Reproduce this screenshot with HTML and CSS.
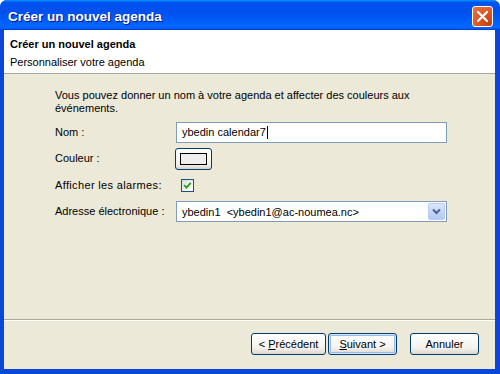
FILE: index.html
```html
<!DOCTYPE html>
<html lang="fr">
<head>
<meta charset="utf-8">
<title>Créer un nouvel agenda</title>
<link rel="stylesheet" href="styles.css">
</head>
<body>
<div class="window">
  <div class="titlebar">
    <span class="title">Créer un nouvel agenda</span>
    <span class="close">
      <svg width="19" height="19" viewBox="0 0 19 19"><path d="M5 5 L14 14 M14 5 L5 14" stroke="#fff" stroke-width="2.2" stroke-linecap="round" fill="none"/></svg>
    </span>
  </div>
  <div class="main">
    <div class="header">
      <div class="h-title">Créer un nouvel agenda</div>
      <div class="h-sub">Personnaliser votre agenda</div>
    </div>
    <div class="content">
      <p class="intro">Vous pouvez donner un nom à votre agenda et affecter des couleurs aux<br>événements.</p>
      <div class="form">
        <span class="label">Nom :</span>
        <div class="textbox"><span>ybedin calendar7</span><span class="caret"></span></div>
        <span class="label">Couleur :</span>
        <div class="colorbtn"><span class="swatch"></span></div>
        <span class="label label-wide">Afficher les alarmes:</span>
        <div class="check"><svg width="9" height="9" viewBox="0 0 9 9"><path d="M1.2 4.2 L3.4 6.6 L7.8 1.8" stroke="#21A121" stroke-width="1.8" fill="none"/></svg></div>
        <span class="label">Adresse électronique :</span>
        <div class="select"><span class="sel-text">ybedin1&nbsp; &lt;ybedin1@ac-noumea.nc&gt;</span><span class="drop"><svg width="9" height="7" viewBox="0 0 9 7"><path d="M1 1.5 L4.5 5 L8 1.5" stroke="#4D6185" stroke-width="2" fill="none"/></svg></span></div>
      </div>
    </div>
    <div class="footer">
      <button class="btn prev">&lt; <u>P</u>récédent</button>
      <button class="btn next"><u>S</u>uivant &gt;</button>
      <button class="btn cancel">Annuler</button>
    </div>
  </div>
</div>
</body>
</html>
```
FILE: styles.css
```css
* { box-sizing: border-box; }
html, body { margin: 0; padding: 0; }
body {
  width: 500px;
  height: 374px;
  overflow: hidden;
  background: #fff;
  font-family: "Liberation Sans", Arial, sans-serif;
  font-size: 11px;
  color: #000;
}
.window {
  width: 500px;
  height: 374px;
  display: flex;
  flex-direction: column;
  background: #0A46D8;
  border-radius: 7px 7px 0 0;
  overflow: hidden;
}
.titlebar {
  flex: none;
  height: 30px;
  display: flex;
  align-items: center;
  padding: 0 7px 0 8px;
  background: linear-gradient(180deg, #0997ff, #0053ee 8%, #0050ee 40%, #0066ff 88%, #0066ff 93%, #005bff 95%, #003dd7 96%, #003dd7);
}
.title {
  flex: 1;
  color: #fff;
  font-weight: bold;
  font-size: 13.5px;
  padding-top: 3px;
  text-shadow: 1px 1px #0F1089;
}
.close {
  width: 21px;
  height: 21px;
  margin-top: 3px;
  border: 1px solid #fff;
  border-radius: 3px;
  background: radial-gradient(circle at 85% 85%, #c8400f 0%, #dd5a26 55%, #e8744d 100%);
  display: flex;
  align-items: center;
  justify-content: center;
}
.main {
  flex: 1;
  display: flex;
  flex-direction: column;
  margin: 0 5px 5px 4px;
  background: #ECE9D8;
}
.header {
  flex: none;
  height: 44px;
  background: #fff;
  border-bottom: 1px solid #ACA899;
  padding: 7px 6px 0;
}
.h-title { font-weight: bold; line-height: 14px; }
.h-sub { line-height: 14px; margin-top: 4px; }
.content {
  flex: 1;
  padding: 15px 0 0 51px;
}
.intro {
  margin: 0;
  line-height: 13px;
}
.form {
  display: grid;
  grid-template-columns: 120px 272px;
  grid-auto-rows: 22px;
  row-gap: 4.5px;
  margin-top: 6px;
  align-items: center;
}
.label { line-height: 13px; }
.label-wide { letter-spacing: 0.35px; }
.textbox {
  margin-left: 1px;
  width: 271px;
  height: 21px;
  background: #fff;
  border: 1px solid #7F9DB9;
  display: flex;
  align-items: center;
  padding-left: 5px;
}
.caret {
  width: 1px;
  height: 13px;
  background: #000;
  margin-left: 1px;
}
.colorbtn {
  width: 37px;
  height: 22px;
  border: 1px solid #003C74;
  border-radius: 3px;
  background: linear-gradient(#fff, #F0EFEA 80%, #D8D2C6);
  display: flex;
  align-items: center;
  justify-content: center;
}
.swatch {
  width: 27px;
  height: 12px;
  border: 1px solid #000;
  background: #EEEEEE;
}
.check {
  margin-left: 6px;
  width: 13px;
  height: 13px;
  border: 1px solid #1C5180;
  background: linear-gradient(135deg, #DCDCD7, #fff);
  display: flex;
  align-items: center;
  justify-content: center;
}
.select {
  margin-left: 1px;
  width: 271px;
  height: 21px;
  background: #fff;
  border: 1px solid #7F9DB9;
  display: flex;
  align-items: center;
  padding: 1px 1px 1px 5px;
}
.sel-text { flex: 1; white-space: pre; }
.drop {
  width: 17px;
  height: 17px;
  border: 1px solid #B8CCF5;
  border-radius: 2px;
  background: linear-gradient(#DCE6FC, #C1D3FB 60%, #B4C7F5);
  display: flex;
  align-items: center;
  justify-content: center;
}
.footer {
  flex: none;
  height: 50px;
  border-top: 1px solid #ACA899;
  box-shadow: inset 0 1px #fff;
  display: flex;
  justify-content: flex-end;
  align-items: flex-start;
  padding: 13px 16px 0 0;
}
.btn {
  height: 22px;
  padding: 0;
  border: 1px solid #003C74;
  border-radius: 3px;
  background: linear-gradient(#fff, #F3F2EE 70%, #DCD7CC);
  font-family: "Liberation Sans", Arial, sans-serif;
  font-size: 11px;
  color: #000;
}
.prev { width: 75px; }
.next {
  width: 69px;
  margin-left: 2px;
  box-shadow: inset 0 0 0 1px #CEE7FF, inset 0 0 0 2px #98B8EA;
}
.cancel { width: 69px; margin-left: 13px; }
```
